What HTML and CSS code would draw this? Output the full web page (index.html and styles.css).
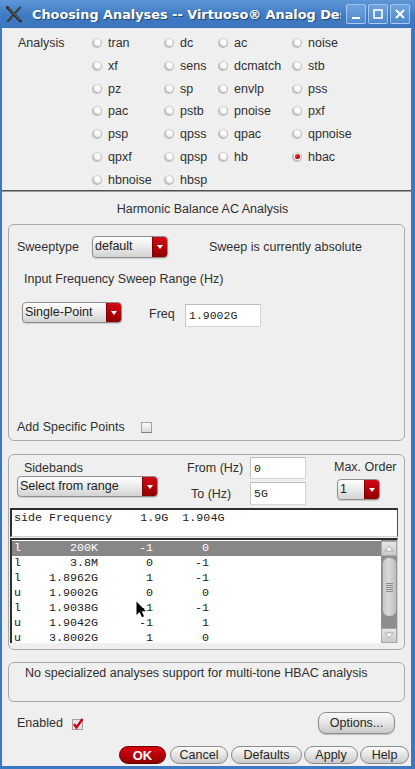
FILE: index.html
```html
<!DOCTYPE html>
<html lang="en">
<head>
<meta charset="utf-8">
<title>Choosing Analyses</title>
<link rel="stylesheet" href="styles.css">
</head>
<body>
<div class="window">
  <header class="titlebar">
    <svg class="app-icon" width="18" height="18" viewBox="0 0 18 18">
      <path d="M2.5 2.5 L15.5 16" stroke="#2b2b2b" stroke-width="3" stroke-linecap="round"/>
      <path d="M15 2.5 L3 16" stroke="#3d3d3d" stroke-width="2.2" stroke-linecap="round"/>
      <path d="M3.5 2.8 L15.5 15.2" stroke="#9a9a9a" stroke-width="0.7"/>
    </svg>
    <div class="title">Choosing Analyses -- Virtuoso® Analog Design Environment (1)</div>
    <div class="wm-buttons">
      <div class="wm-btn"><svg width="18" height="18" viewBox="0 0 18 18"><rect x="5" y="12" width="8" height="2" fill="#fff"/></svg></div>
      <div class="wm-btn"><svg width="18" height="18" viewBox="0 0 18 18"><rect x="5" y="5" width="8" height="8" fill="none" stroke="#fff" stroke-width="1.6"/></svg></div>
      <div class="wm-btn"><svg width="18" height="18" viewBox="0 0 18 18"><path d="M5 5 L13 13 M13 5 L5 13" stroke="#fff" stroke-width="2"/></svg></div>
    </div>
  </header>
  <div class="frame">
    <main class="content">
      <section class="analysis">
        <div class="analysis-label">Analysis</div>
        <div class="radio-grid">
          <div class="radio"><span class="radio-dot"></span>tran</div>
          <div class="radio"><span class="radio-dot"></span>dc</div>
          <div class="radio"><span class="radio-dot"></span>ac</div>
          <div class="radio"><span class="radio-dot"></span>noise</div>
          <div class="radio"><span class="radio-dot"></span>xf</div>
          <div class="radio"><span class="radio-dot"></span>sens</div>
          <div class="radio"><span class="radio-dot"></span>dcmatch</div>
          <div class="radio"><span class="radio-dot"></span>stb</div>
          <div class="radio"><span class="radio-dot"></span>pz</div>
          <div class="radio"><span class="radio-dot"></span>sp</div>
          <div class="radio"><span class="radio-dot"></span>envlp</div>
          <div class="radio"><span class="radio-dot"></span>pss</div>
          <div class="radio"><span class="radio-dot"></span>pac</div>
          <div class="radio"><span class="radio-dot"></span>pstb</div>
          <div class="radio"><span class="radio-dot"></span>pnoise</div>
          <div class="radio"><span class="radio-dot"></span>pxf</div>
          <div class="radio"><span class="radio-dot"></span>psp</div>
          <div class="radio"><span class="radio-dot"></span>qpss</div>
          <div class="radio"><span class="radio-dot"></span>qpac</div>
          <div class="radio"><span class="radio-dot"></span>qpnoise</div>
          <div class="radio"><span class="radio-dot"></span>qpxf</div>
          <div class="radio"><span class="radio-dot"></span>qpsp</div>
          <div class="radio"><span class="radio-dot"></span>hb</div>
          <div class="radio"><span class="radio-dot on"></span>hbac</div>
          <div class="radio"><span class="radio-dot"></span>hbnoise</div>
          <div class="radio"><span class="radio-dot"></span>hbsp</div>
        </div>
      </section>
      <div class="separator"></div>
      <div class="section-title">Harmonic Balance AC Analysis</div>

      <section class="group sweep-group">
        <div class="sweep-row">
          <span class="sweep-label">Sweeptype</span>
          <div class="combo combo-sweeptype"><span class="combo-text">default</span><span class="combo-arrow"></span></div>
          <span class="sweep-note">Sweep is currently absolute</span>
        </div>
        <div class="range-title">Input Frequency Sweep Range (Hz)</div>
        <div class="range-row">
          <div class="combo combo-range"><span class="combo-text">Single-Point</span><span class="combo-arrow"></span></div>
          <span class="freq-label">Freq</span>
          <div class="field field-freq">1.9002G</div>
        </div>
        <div class="points-row">
          <span class="points-label">Add Specific Points</span>
          <span class="checkbox"></span>
        </div>
      </section>

      <section class="group sideband-group">
        <div class="sb-top">
          <div class="sb-left">
            <div class="sidebands-label">Sidebands</div>
            <div class="combo combo-sidebands"><span class="combo-text">Select from range</span><span class="combo-arrow"></span></div>
          </div>
          <div class="sb-mid">
            <div class="hz-row"><span class="hz-label">From (Hz)</span><div class="field field-hz">0</div></div>
            <div class="hz-row hz-row-to"><span class="hz-label hz-label-to">To (Hz)</span><div class="field field-hz">5G</div></div>
          </div>
          <div class="sb-right">
            <div class="order-label">Max. Order</div>
            <div class="combo combo-order"><span class="combo-text">1</span><span class="combo-arrow"></span></div>
          </div>
        </div>
        <div class="list-header">side Frequency    1.9G  1.904G</div>
        <div class="list">
          <div class="list-rows">
            <div class="list-row selected"><span>l</span><span>200K</span><span>-1</span><span>0</span></div>
            <div class="list-row"><span>l</span><span>3.8M</span><span>0</span><span>-1</span></div>
            <div class="list-row"><span>l</span><span>1.8962G</span><span>1</span><span>-1</span></div>
            <div class="list-row"><span>u</span><span>1.9002G</span><span>0</span><span>0</span></div>
            <div class="list-row"><span>l</span><span>1.9038G</span><span>-1</span><span>-1</span></div>
            <div class="list-row"><span>u</span><span>1.9042G</span><span>-1</span><span>1</span></div>
            <div class="list-row"><span>u</span><span>3.8002G</span><span>1</span><span>0</span></div>
          </div>
          <div class="scrollbar">
            <div class="sb-btn"><svg width="10" height="7" viewBox="0 0 10 7"><path d="M1 6 L5 1 L9 6 Z" fill="#fff" stroke="#9a9a9a" stroke-width="0.8"/></svg></div>
            <div class="sb-thumb"><span class="grip"></span></div>
            <div class="sb-btn sb-down"><svg width="10" height="7" viewBox="0 0 10 7"><path d="M1 1 L5 6 L9 1 Z" fill="#fff" stroke="#9a9a9a" stroke-width="0.8"/></svg></div>
          </div>
        </div>
      </section>

      <section class="group info">No specialized analyses support for multi-tone HBAC analysis</section>

      <div class="enabled-row">
        <span class="enabled-label">Enabled</span>
        <svg class="check-on" width="12" height="13" viewBox="0 0 12 13">
          <rect x="0.5" y="2.5" width="10" height="10" fill="#e6e6e6" stroke="#a0a0a0"/>
          <path d="M2 7 L4.5 10.5 L10.5 2" fill="none" stroke="#d10010" stroke-width="2.4"/>
        </svg>
        <div class="btn options-btn">Options...</div>
      </div>

      <div class="actions">
        <div class="btn btn-ok">OK</div>
        <div class="btn btn-cancel">Cancel</div>
        <div class="btn btn-defaults">Defaults</div>
        <div class="btn btn-apply">Apply</div>
        <div class="btn btn-help">Help</div>
      </div>
    </main>
  </div>
</div>
<svg class="cursor" width="12" height="17" viewBox="0 0 12 17">
  <path d="M0.5 0.5 L0.5 14 L3.6 11 L6 16.2 L8 15.3 L5.7 10.3 L10 10.3 Z" fill="#000"/>
</svg>
</body>
</html>
```

FILE: styles.css
```css
* { box-sizing: border-box; }
html, body { margin: 0; padding: 0; }
body {
  width: 415px;
  height: 769px;
  overflow: hidden;
  position: relative;
  font-family: "Liberation Sans", Arial, sans-serif;
  font-size: 12.5px;
  color: #303030;
  background: #3b77c1;
}
.window {
  width: 415px;
  height: 769px;
  display: flex;
  flex-direction: column;
}
.titlebar {
  height: 28px;
  display: flex;
  align-items: center;
  background: linear-gradient(#5e96d7, #3f7bc4 55%, #3a75be);
}
.app-icon { margin-left: 5px; flex: 0 0 auto; }
.title {
  margin-left: 9px;
  width: 309px;
  flex: 0 0 309px;
  overflow: hidden;
  white-space: nowrap;
  font-family: "DejaVu Sans", sans-serif;
  font-weight: bold;
  font-size: 12.85px;
  color: #fff;
  text-shadow: 1px 1px 1px rgba(0, 0, 0, 0.45);
  padding-top: 1px;
}
.wm-buttons {
  margin-left: auto;
  margin-right: 5px;
  display: flex;
  gap: 2px;
}
.wm-btn {
  width: 20px;
  height: 20px;
  border: 1px solid rgba(255, 255, 255, 0.45);
  border-radius: 2px;
  background: linear-gradient(#6fa3df, #4d88cf);
  display: flex;
  align-items: center;
  justify-content: center;
}
.frame {
  flex: 1;
  display: flex;
  padding: 0 3px 3px 2px;
  background: #3c79c3;
}
.content {
  flex: 1;
  display: flex;
  flex-direction: column;
  background: #efefef;
  border-right: 1px solid #6f6f6f;
  border-top: 1px solid #e4ebf4;
}

/* Analysis radio grid */
.analysis {
  height: 161px;
  padding: 2.6px 0 0 16px;
  display: flex;
}
.analysis-label { width: 74px; line-height: 22.8px; }
.radio-grid {
  display: grid;
  grid-template-columns: 72px 54px 74px auto;
  grid-auto-rows: 22.8px;
}
.radio { display: flex; align-items: center; }
.radio-dot {
  width: 10px;
  height: 10px;
  margin-right: 6px;
  border-radius: 50%;
  border: 1px solid #b9b9b9;
  border-top-color: #d4d4d4;
  background: radial-gradient(circle at 60% 35%, #ffffff 0, #f6f6f6 45%, #d2d2d2 100%);
  box-shadow: inset 1px -1px 1px rgba(0, 0, 0, 0.18);
  position: relative;
}
.radio-dot.on::after {
  content: "";
  position: absolute;
  left: 1.5px;
  top: 1.5px;
  width: 5px;
  height: 5px;
  border-radius: 50%;
  background: radial-gradient(circle at 40% 35%, #ff3030, #c80000 60%, #8a0000);
}
.separator {
  height: 2px;
  border-top: 1px solid #4f4f4f;
  border-bottom: 1px solid #9c9c9c;
}
.section-title {
  height: 32px;
  padding: 2px 8px 0 0;
  display: flex;
  align-items: center;
  justify-content: center;
}

/* Group boxes */
.group {
  margin: 0 6px;
  border: 1px solid #a9a9a9;
  border-radius: 6px;
}
.sweep-group {
  height: 217px;
  padding: 0 8px;
  display: flex;
  flex-direction: column;
}
.sweep-row {
  margin-top: 11px;
  height: 22px;
  display: flex;
  align-items: center;
}
.sweep-label { width: 75px; }
.sweep-note { margin-left: 41px; }
.range-title { margin-top: 13px; line-height: 16px; padding-left: 7px; }
.range-row {
  margin-top: 14px;
  height: 26px;
  display: flex;
  align-items: flex-start;
  padding-left: 5px;
}
.freq-label { width: 36px; margin-left: 27px; margin-top: 5px; line-height: 16px; }
.points-row {
  margin-top: auto;
  margin-bottom: 5px;
  height: 16px;
  display: flex;
  align-items: center;
}
.points-label { width: 124px; }
.checkbox {
  width: 11px;
  height: 11px;
  border: 1px solid #a3a3a3;
  border-bottom-color: #7d7d7d;
  background: linear-gradient(#fbfbfb, #d9d9d9);
}

/* Combo boxes */
.combo {
  display: flex;
  border: 1px solid #8e8e8e;
  border-radius: 4px;
  overflow: hidden;
  background: linear-gradient(#ffffff, #ececec 45%, #d3d3d3);
  box-shadow: 0 1px 1px rgba(0, 0, 0, 0.15);
}
.combo-text {
  flex: 1;
  padding-left: 2px;
  color: #222;
  display: flex;
  align-items: center;
  padding-bottom: 2px;
  white-space: nowrap;
}
.combo-arrow {
  width: 15px;
  flex: 0 0 15px;
  background: linear-gradient(#cf0b15, #b3000a 55%, #8c0000);
  border-left: 1px solid #7a0000;
  display: flex;
  align-items: center;
  justify-content: center;
}
.combo-arrow::after {
  content: "";
  width: 0;
  height: 0;
  border-left: 3.5px solid transparent;
  border-right: 3.5px solid transparent;
  border-top: 4px solid #fff;
}
.combo-sweeptype { width: 76px; height: 22px; }
.combo-range { width: 100px; height: 21px; margin-top: 1px; }
.combo-sidebands { width: 141px; height: 21px; }
.combo-order { width: 43px; height: 21px; margin-top: 4px; margin-left: 3px; }

/* Text fields */
.field {
  background: #fff;
  border: 1px solid #d4d4d4;
  border-top-color: #bdbdbd;
  border-left-color: #c6c6c6;
  font-family: "Liberation Mono", "DejaVu Sans Mono", monospace;
  font-size: 11.5px;
  color: #222;
  padding-left: 3px;
  display: flex;
  align-items: center;
}
.field-freq { width: 76px; height: 23px; margin-top: 3px; }

/* Sidebands group */
.sideband-group {
  margin-top: 13px;
  height: 196px;
  display: flex;
  flex-direction: column;
}
.sb-top { height: 53px; display: flex; align-items: flex-start; }
.sb-left { margin-left: 8px; width: 141px; }
.sidebands-label { margin-top: 5px; line-height: 16px; padding-left: 7px; }
.sb-mid { margin-left: 29px; }
.hz-row { display: flex; align-items: center; margin-top: 2px; height: 22px; }
.hz-row-to { margin-top: 3px; height: 23px; }
.hz-label { width: 63px; }
.hz-label-to { padding-left: 4px; }
.field-hz { width: 56px; height: 100%; }
.sb-right { margin-left: 28px; }
.order-label { margin-top: 4px; line-height: 16px; }

.list-header {
  margin-left: 1px;
  width: 388px;
  height: 29px;
  background: #fff;
  border-top: 2px solid #2e2e2e;
  border-left: 2px solid #2e2e2e;
  border-right: 1px solid #4a4a4a;
  border-bottom: 1px solid #d0d0d0;
  padding: 1px 0 0 2px;
  white-space: pre;
  font-family: "Liberation Mono", "DejaVu Sans Mono", monospace;
  font-size: 11.7px;
  line-height: 15px;
  color: #222;
}
.list {
  margin: 1px 0 0 1px;
  width: 388px;
  height: 105px;
  display: flex;
  background: #fff;
  border-top: 2px solid #2e2e2e;
  border-left: 2px solid #2e2e2e;
  border-right: 1px solid #d0d0d0;
  overflow: hidden;
}
.list-rows { flex: 1; padding-top: 1px; }
.list-row {
  display: grid;
  grid-template-columns: 14px 70px 55px 56px;
  height: 15px;
  padding-left: 2px;
  font-family: "Liberation Mono", "DejaVu Sans Mono", monospace;
  font-size: 11.7px;
  line-height: 15px;
  color: #222;
}
.list-row span:not(:first-child) { text-align: right; }
.list-row.selected { background: #878787; color: #fff; }
.scrollbar {
  width: 16px;
  flex: 0 0 16px;
  background: #8e8e8e;
  display: flex;
  flex-direction: column;
  align-items: center;
}
.sb-btn {
  width: 16px;
  height: 15px;
  margin-top: 1px;
  background: linear-gradient(#e6e6e6, #cacaca);
  border: 1px solid #a8a8a8;
  display: flex;
  align-items: center;
  justify-content: center;
}
.sb-down { margin-top: auto; }
.sb-thumb {
  width: 15px;
  height: 60px;
  margin-top: 1px;
  border-radius: 7px;
  border: 1px solid #969696;
  background: linear-gradient(90deg, #c9c9c9, #d9d9d9 45%, #bdbdbd);
  display: flex;
  align-items: center;
  justify-content: center;
}
.grip {
  width: 7px;
  height: 9px;
  background: repeating-linear-gradient(#8a8a8a 0, #8a8a8a 1px, transparent 1px, transparent 2px);
}

/* Info */
.info {
  margin-top: 12px;
  height: 40px;
  padding: 2px 0 0 16px;
  line-height: 16px;
}

/* Enabled + buttons */
.enabled-row {
  margin-top: 10px;
  height: 22px;
  display: flex;
  align-items: center;
  padding: 0 16px 0 15px;
}
.enabled-label { width: 55px; }
.check-on { margin-top: 1px; }
.btn {
  display: flex;
  align-items: center;
  justify-content: center;
  border: 1px solid #8c8c8c;
  background: linear-gradient(#fbfbfb, #e4e4e4 50%, #c9c9c9);
  color: #262626;
  white-space: nowrap;
}
.options-btn {
  margin-left: auto;
  width: 77px;
  height: 22px;
  border-radius: 8px;
  box-shadow: 0 1px 1px rgba(0, 0, 0, 0.2);
}
.actions {
  margin-top: 12px;
  height: 18px;
  display: flex;
  justify-content: flex-end;
  gap: 2px;
  padding-right: 2px;
}
.actions .btn { height: 18px; border-radius: 9px; }
.btn-ok {
  width: 47px;
  margin-right: 2px;
  background: linear-gradient(#d9000f, #b50008 55%, #8e0000);
  border-color: #6a0000;
  color: #fff;
  font-weight: bold;
  font-size: 13px;
}
.btn-cancel { width: 58px; margin-right: 1px; }
.btn-defaults { width: 71px; }
.btn-apply { width: 54px; }
.btn-help { width: 49px; }

.cursor {
  position: absolute;
  left: 136px;
  top: 601px;
}
```
